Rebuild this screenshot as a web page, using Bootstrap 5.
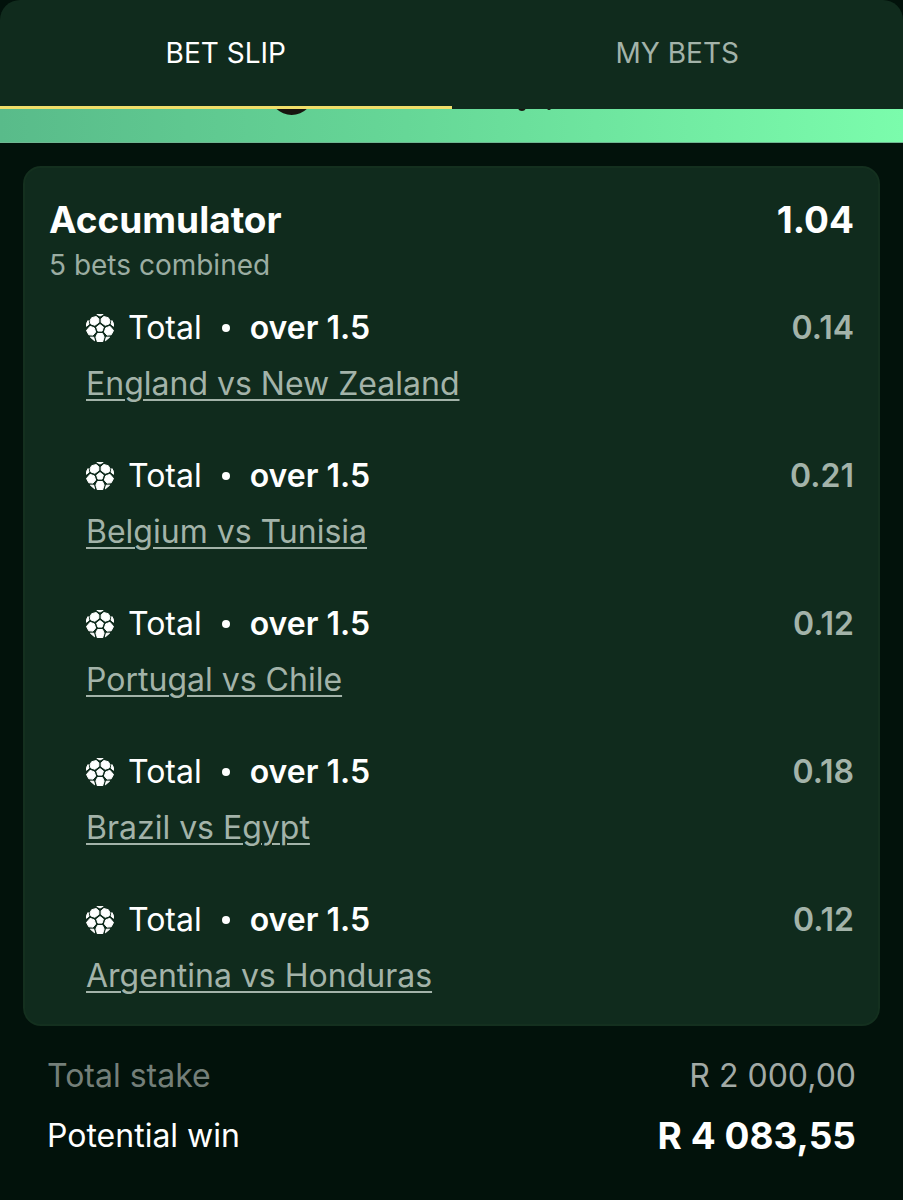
<!DOCTYPE html>
<html lang="en">
<head>
<meta charset="utf-8">
<meta name="viewport" content="width=device-width, initial-scale=1">
<title>Bet slip</title>
<link href="https://cdn.jsdelivr.net/npm/bootstrap@5.3.0/dist/css/bootstrap.min.css" rel="stylesheet">
<style>
  body { background: #02120b; color: #fff; font-family: Inter, "Liberation Sans", sans-serif; font-size: 32px; line-height: 40px; }
  .slip-tabs { background: #102b1d; border-radius: 20px 20px 0 0; }
  .slip-tabs .nav-link { height: 109px; padding: 0; background: transparent; border: 0; border-bottom: 3px solid transparent; border-radius: 0; color: #a3b3a9; font-size: 28px; line-height: 40px; }
  .slip-tabs .nav-link.active { background: transparent; color: #fff; border-bottom-color: #f0de69; }
  .promo-strip { height: 34px; background: linear-gradient(90deg, #59bb8a, #66d797 45%, #7bfcac); border-bottom: 1px solid #6fb692; }
  .acca-card { margin: 23px 23px 0; padding: 28px 24px; background: #102b1d; border: 2px solid #14301f; border-radius: 18px; color: #fff; }
  .headline { font-size: 37px; line-height: 48px; font-weight: 700; }
  .subline { font-size: 28px; line-height: 42px; color: #9bada2; }
  .selections { margin: 22px 0 0; padding-left: 37px; gap: 52px; }
  .pick { gap: 16px; }
  .ball { width: 28px; height: 28px; margin-right: 14px; }
  .sep { width: 8px; height: 8px; margin: 0 20px; border-radius: 50%; background: #fff; }
  .odds { color: #a3b3a9; }
  .match-link { color: #a3b3a9; text-decoration-thickness: 2px; text-underline-offset: 4px; }
  .match-link:hover { color: #fff; }
  .totals { padding: 30px 47px 36px; gap: 16px; }
  .stake-label { color: #747f79; }
  .stake-value { color: #a2aaa6; }
</style>
</head>
<body>
<svg class="d-none" aria-hidden="true">
  <symbol id="football" viewBox="0 0 28 28">
    <clipPath id="ballEdge"><circle cx="14" cy="14" r="14"/></clipPath>
    <g clip-path="url(#ballEdge)" fill="#fff" stroke="#fff" stroke-width="1" stroke-linejoin="round">
      <path d="M14 10.6l3.400 2.500-1.300 4h-4.200l-1.300-4z"/>
      <path d="M5.700 3.700l4.500-1.200 2.600 2.300v3.600l-4 2.900-3.900-1.400-.9-3.200z"/>
      <path d="M22.300 3.700l-4.500-1.200-2.600 2.300v3.600l4 2.900 3.900-1.400.9-3.200z"/>
      <path d="M4.100 12.300l4.200 1.600 1.300 4.200-2.600 3-4.200-.3-2.300-4.300z"/>
      <path d="M23.900 12.300l-4.200 1.600-1.300 4.200 2.600 3 4.200-.3 2.300-4.300z"/>
      <path d="M11.500 19.500h5l1.600 3.600-1.600 5h-5l-1.600-5z"/>
      <path d="M10.800.3h6.400L14 2zM.6 9.300l1.500-2.800.9 3.700-2.600 2.100zM27.400 9.300l-1.500-2.800-.9 3.700 2.600 2.100zM4.400 23.200h3.300l.9 3.600zM23.600 23.200h-3.300l-.9 3.600z"/>
    </g>
  </symbol>
</svg>

<header>
  <ul class="nav nav-justified slip-tabs" role="tablist">
    <li class="nav-item" role="presentation"><button class="nav-link active w-100" type="button" role="tab" aria-selected="true">BET SLIP</button></li>
    <li class="nav-item" role="presentation"><button class="nav-link w-100" type="button" role="tab" aria-selected="false">MY BETS</button></li>
  </ul>
  <div class="promo-strip">
    <svg class="d-block overflow-hidden" width="100%" height="33" aria-hidden="true" fill="#17150f">
      <circle cx="32.300%" cy="-16" r="22"/>
      <circle cx="57.800%" cy="-2" r="4"/>
      <circle cx="60.800%" cy="-1" r="2"/>
    </svg>
  </div>
</header>

<main>
  <section class="acca-card">
    <div class="d-flex justify-content-between headline">
      <h1 class="headline m-0">Accumulator</h1>
      <span>1.04</span>
    </div>
    <div class="subline">5 bets combined</div>
    <ul class="selections list-unstyled d-flex flex-column">
      <li class="pick d-flex flex-column align-items-start">
        <div class="d-flex align-items-center w-100"><svg class="ball" aria-hidden="true"><use href="#football"/></svg><span>Total</span><span class="sep"></span><span class="fw-semibold">over 1.5</span><span class="odds fw-semibold ms-auto">0.14</span></div>
        <a class="match-link" href="#">England vs New Zealand</a>
      </li>
      <li class="pick d-flex flex-column align-items-start">
        <div class="d-flex align-items-center w-100"><svg class="ball" aria-hidden="true"><use href="#football"/></svg><span>Total</span><span class="sep"></span><span class="fw-semibold">over 1.5</span><span class="odds fw-semibold ms-auto">0.21</span></div>
        <a class="match-link" href="#">Belgium vs Tunisia</a>
      </li>
      <li class="pick d-flex flex-column align-items-start">
        <div class="d-flex align-items-center w-100"><svg class="ball" aria-hidden="true"><use href="#football"/></svg><span>Total</span><span class="sep"></span><span class="fw-semibold">over 1.5</span><span class="odds fw-semibold ms-auto">0.12</span></div>
        <a class="match-link" href="#">Portugal vs Chile</a>
      </li>
      <li class="pick d-flex flex-column align-items-start">
        <div class="d-flex align-items-center w-100"><svg class="ball" aria-hidden="true"><use href="#football"/></svg><span>Total</span><span class="sep"></span><span class="fw-semibold">over 1.5</span><span class="odds fw-semibold ms-auto">0.18</span></div>
        <a class="match-link" href="#">Brazil vs Egypt</a>
      </li>
      <li class="pick d-flex flex-column align-items-start">
        <div class="d-flex align-items-center w-100"><svg class="ball" aria-hidden="true"><use href="#football"/></svg><span>Total</span><span class="sep"></span><span class="fw-semibold">over 1.5</span><span class="odds fw-semibold ms-auto">0.12</span></div>
        <a class="match-link" href="#">Argentina vs Honduras</a>
      </li>
    </ul>
  </section>

  <section class="totals d-flex flex-column">
    <div class="d-flex align-items-center justify-content-between"><span class="stake-label">Total stake</span><span class="stake-value">R 2 000,00</span></div>
    <div class="d-flex align-items-center justify-content-between"><span>Potential win</span><span class="headline">R 4 083,55</span></div>
  </section>
</main>
<script src="https://cdn.jsdelivr.net/npm/bootstrap@5.3.0/dist/js/bootstrap.bundle.min.js"></script>
</body>
</html>
